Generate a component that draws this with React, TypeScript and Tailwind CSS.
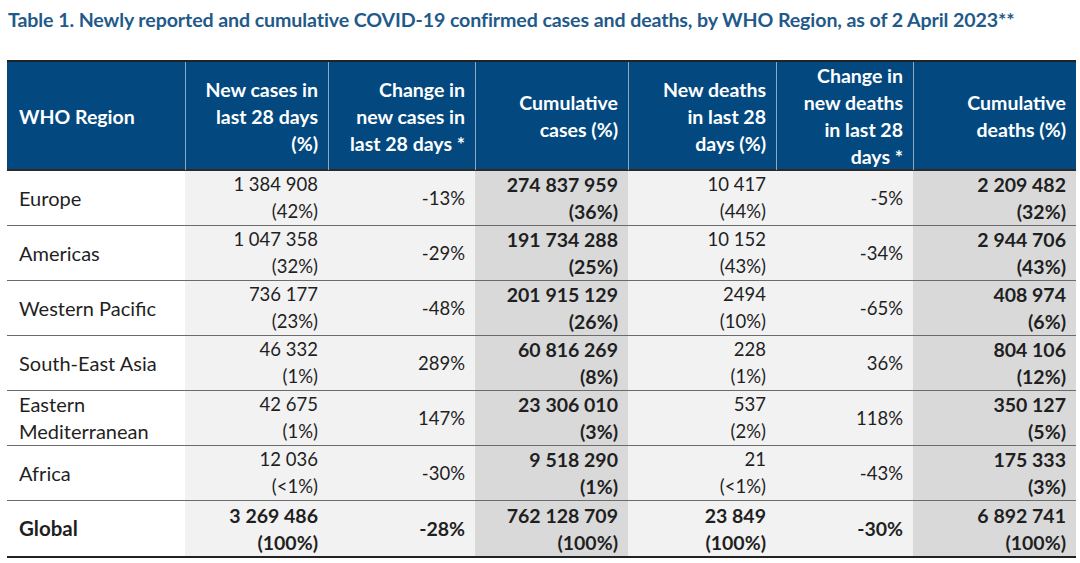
import * as React from "react";

type Row = {
  region: string[];
  newCases: [string, string];
  changeCases: string;
  cumCases: [string, string];
  newDeaths: [string, string];
  changeDeaths: string;
  cumDeaths: [string, string];
  total?: boolean;
};

const ROWS: Row[] = [
  { region: ["Europe"], newCases: ["1 384 908", "(42%)"], changeCases: "-13%", cumCases: ["274 837 959", "(36%)"], newDeaths: ["10 417", "(44%)"], changeDeaths: "-5%", cumDeaths: ["2 209 482", "(32%)"] },
  { region: ["Americas"], newCases: ["1 047 358", "(32%)"], changeCases: "-29%", cumCases: ["191 734 288", "(25%)"], newDeaths: ["10 152", "(43%)"], changeDeaths: "-34%", cumDeaths: ["2 944 706", "(43%)"] },
  { region: ["Western Pacific"], newCases: ["736 177", "(23%)"], changeCases: "-48%", cumCases: ["201 915 129", "(26%)"], newDeaths: ["2494", "(10%)"], changeDeaths: "-65%", cumDeaths: ["408 974", "(6%)"] },
  { region: ["South-East Asia"], newCases: ["46 332", "(1%)"], changeCases: "289%", cumCases: ["60 816 269", "(8%)"], newDeaths: ["228", "(1%)"], changeDeaths: "36%", cumDeaths: ["804 106", "(12%)"] },
  { region: ["Eastern", "Mediterranean"], newCases: ["42 675", "(1%)"], changeCases: "147%", cumCases: ["23 306 010", "(3%)"], newDeaths: ["537", "(2%)"], changeDeaths: "118%", cumDeaths: ["350 127", "(5%)"] },
  { region: ["Africa"], newCases: ["12 036", "(<1%)"], changeCases: "-30%", cumCases: ["9 518 290", "(1%)"], newDeaths: ["21", "(<1%)"], changeDeaths: "-43%", cumDeaths: ["175 333", "(3%)"] },
  { region: ["Global"], newCases: ["3 269 486", "(100%)"], changeCases: "-28%", cumCases: ["762 128 709", "(100%)"], newDeaths: ["23 849", "(100%)"], changeDeaths: "-30%", cumDeaths: ["6 892 741", "(100%)"], total: true },
];

const HEAD: { lines: string[]; left?: boolean }[] = [
  { lines: ["WHO Region"], left: true },
  { lines: ["New cases in", "last 28 days", "(%)"] },
  { lines: ["Change in", "new cases in", "last 28 days *"] },
  { lines: ["Cumulative", "cases (%)"] },
  { lines: ["New deaths", "in last 28", "days (%)"] },
  { lines: ["Change in", "new deaths", "in last 28", "days *"] },
  { lines: ["Cumulative", "deaths (%)"] },
];

const GRID = "grid grid-cols-[178px_143px_147px_153px_148px_137px_163px]";

function Cell({
  lines,
  bg,
  bold,
  left,
  last,
}: {
  lines: string[];
  bg: string;
  bold?: boolean;
  left?: boolean;
  last?: boolean;
}) {
  const size = left
    ? bold
      ? "text-[20.5px] font-bold"
      : "text-[20px]"
    : bold
      ? "text-[19.5px] font-bold"
      : "text-[18.5px]";
  return (
    <div
      className={`flex h-[55px] flex-col justify-center leading-[27px] ${bg} ${
        left ? "items-start pl-3" : "items-end pr-[10px]"
      } ${size} ${last ? "" : "border-b border-[#6b6b6b]"}`}
    >
      {lines.map((l) => (
        <span key={l} className="whitespace-nowrap">{l}</span>
      ))}
    </div>
  );
}

export default function App() {
  return (
    <div
      className="h-[563px] w-[1080px] bg-white px-[7px] pt-[6px] text-[#1f1f1f]"
      style={{ fontFamily: "Lato, 'Open Sans', sans-serif" }}
    >
      <h1 className="px-px text-[19.6px] font-bold leading-[28px] tracking-[-0.1px] text-[#1f5a8a]">
        Table 1. Newly reported and cumulative COVID-19 confirmed cases and deaths, by WHO Region, as of 2 April 2023**
      </h1>

      <div className="mt-[26px] w-[1069px]">
        <div className={`${GRID} h-[111px] border-t-2 border-b-2 border-t-[#222] border-b-[#2a2a2a] bg-[#03497f] text-[19.5px] font-bold text-white`}>
          {HEAD.map((h, i) => (
            <div
              key={i}
              className={`flex flex-col justify-center leading-[27px] ${
                h.left ? "items-start pl-3" : "items-end pr-[10px] text-right"
              } ${i > 0 ? "border-l border-[#8aa9c6]" : ""}`}
            >
              {h.lines.map((l) => (
                <span key={l} className="whitespace-nowrap">{l}</span>
              ))}
            </div>
          ))}
        </div>

        <div className="border-b-2 border-[#222]">
          {ROWS.map((r, i) => {
            const last = i === ROWS.length - 1;
            const b = !!r.total;
            return (
              <div key={r.region.join(" ")} className={GRID}>
                <Cell lines={r.region} bg="bg-white" bold={b} left last={last} />
                <Cell lines={r.newCases} bg="bg-[#f2f2f2]" bold={b} last={last} />
                <Cell lines={[r.changeCases]} bg="bg-[#f2f2f2]" bold={b} last={last} />
                <Cell lines={r.cumCases} bg="bg-[#d9d9d9]" bold last={last} />
                <Cell lines={r.newDeaths} bg="bg-[#f2f2f2]" bold={b} last={last} />
                <Cell lines={[r.changeDeaths]} bg="bg-[#f2f2f2]" bold={b} last={last} />
                <Cell lines={r.cumDeaths} bg="bg-[#d9d9d9]" bold last={last} />
              </div>
            );
          })}
        </div>
      </div>
    </div>
  );
}
